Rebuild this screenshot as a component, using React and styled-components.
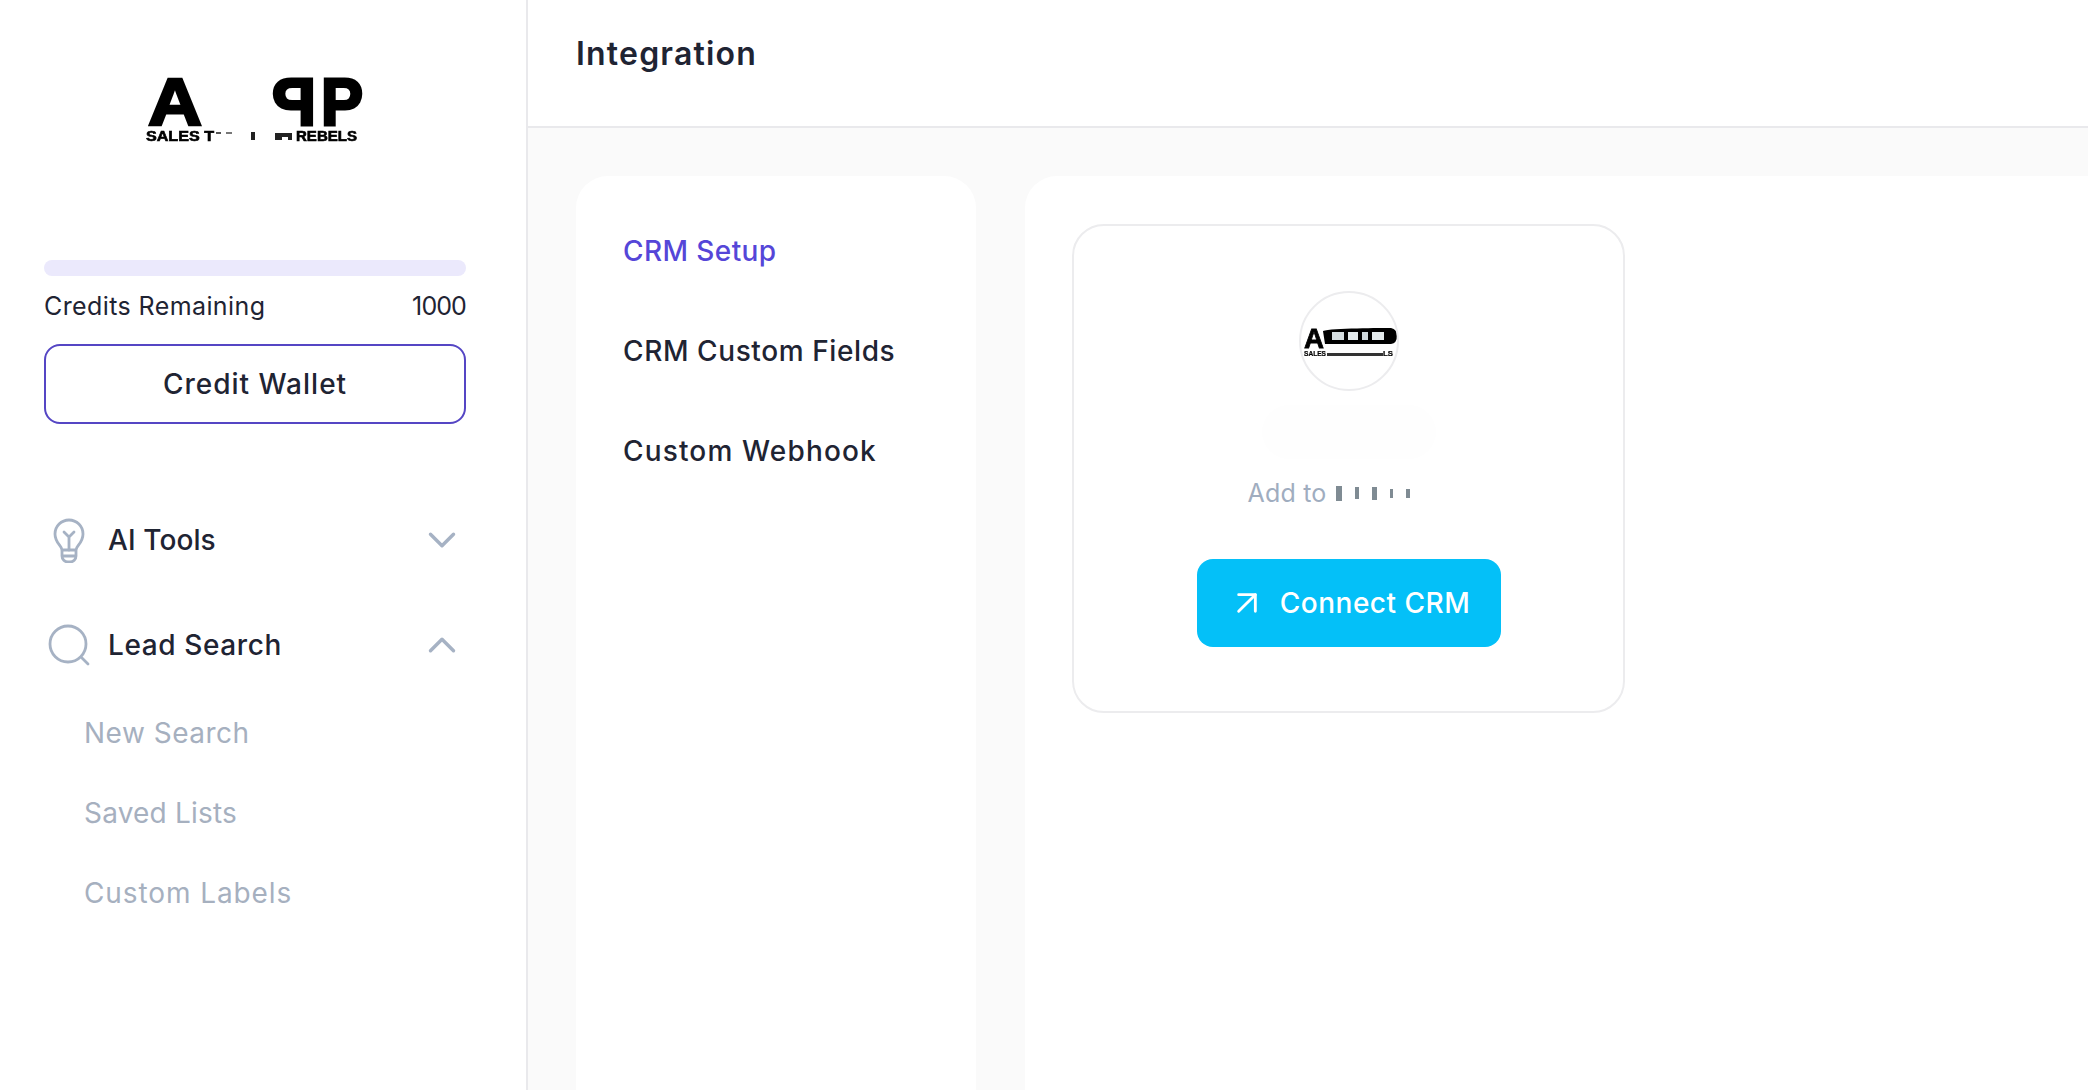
import styled, { createGlobalStyle } from "styled-components"
import { ChevronDown, ChevronUp, ArrowUpRight } from "lucide-react"

const GlobalStyle = createGlobalStyle`
  html, body {
    margin: 0;
    height: 100%;
    overflow: hidden;
    background: #ffffff;
    font-family: Inter, "Noto Sans", sans-serif;
    color: #1f2433;
  }
  * { box-sizing: border-box; }
`

const Page = styled.div`
  display: flex;
  width: 2088px;
  height: 1090px;
  overflow: hidden;
`

const Sidebar = styled.aside`
  flex: 0 0 528px;
  padding: 50px 60px 0 44px;
  background: #ffffff;
  border-right: 2px solid #e9e9ec;
`

const LogoWrap = styled.div`
  height: 100px;
  margin: 0 0 110px 96px;
`

const Progress = styled.div`
  height: 16px;
  border-radius: 8px;
  background: #ebe9fc;
`

const CreditsRow = styled.div`
  display: flex;
  justify-content: space-between;
  align-items: center;
  height: 34px;
  margin-top: 13px;
  font-size: 25px;
  letter-spacing: 0.4px;
`

const CreditsValue = styled.span`
  letter-spacing: -0.9px;
`

const WalletButton = styled.button`
  display: block;
  width: 100%;
  height: 80px;
  margin-top: 21px;
  background: #ffffff;
  border: 2px solid #5546c4;
  border-radius: 16px;
  font: 500 28px Inter, sans-serif;
  color: #1f2433;
  letter-spacing: 1px;
`

const Nav = styled.nav`
  margin-top: 84px;
`

const NavRow = styled.div`
  display: flex;
  align-items: center;
  height: 64px;
  margin-bottom: ${(p) => p.$gap}px;
  font-size: 28px;
  font-weight: 500;
  letter-spacing: ${(p) => p.$track}px;
`

const NavIcon = styled.span`
  display: flex;
  justify-content: center;
  flex: 0 0 44px;
  margin: 0 17px 0 3px;
`

const NavLabel = styled.span`
  flex: 1;
`

const Chevron = styled.span`
  display: flex;
  margin-right: 1px;
  color: #a6b2c4;
`

const SubItem = styled.div`
  display: flex;
  align-items: center;
  height: 80px;
  padding-left: 40px;
  font-size: 28px;
  color: #a6b0bf;
  letter-spacing: ${(p) => p.$track}px;
`

const Main = styled.main`
  flex: 1;
  min-width: 0;
  background: #fafafa;
`

const Header = styled.header`
  display: flex;
  align-items: center;
  height: 128px;
  padding: 0 48px 20px;
  background: #ffffff;
  border-bottom: 2px solid #e9e9ec;
`

const Title = styled.h1`
  margin: 0;
  font-size: 32px;
  font-weight: 600;
  letter-spacing: 1.2px;
`

const Content = styled.div`
  display: flex;
  gap: 49px;
  padding: 48px 0 0 48px;
`

const TabsCard = styled.div`
  flex: 0 0 400px;
  height: 1000px;
  padding: 25px 47px;
  background: #ffffff;
  border-radius: 32px;
`

const Tab = styled.div`
  display: flex;
  align-items: center;
  height: 100px;
  font-size: 28px;
  font-weight: 500;
  letter-spacing: ${(p) => p.$track}px;
  white-space: nowrap;
  color: ${(p) => (p.$active ? "#5546d8" : "#1f2433")};
`

const PanelCard = styled.div`
  flex: 0 0 1200px;
  height: 1000px;
  padding: 48px 48px 48px 47px;
  background: #ffffff;
  border-radius: 32px;
`

const CrmCard = styled.div`
  display: flex;
  flex-direction: column;
  align-items: center;
  width: 553px;
  height: 489px;
  padding-top: 65px;
  border: 2px solid #ececee;
  border-radius: 32px;
`

const CrmLogo = styled.div`
  display: flex;
  align-items: center;
  justify-content: center;
  width: 100px;
  height: 100px;
  border: 2px solid #ececee;
  border-radius: 50%;
  overflow: hidden;
`

const NamePlaceholder = styled.div`
  width: 174px;
  height: 54px;
  margin-top: 14px;
  border-radius: 27px;
  background: #fefefe;
`

const AddRow = styled.div`
  display: flex;
  align-items: center;
  gap: 9px;
  height: 34px;
  margin: 17px 0 0 -40px;
  font-size: 25px;
  letter-spacing: 0.2px;
  color: #a0adbf;
`

const Smudges = styled.span`
  display: flex;
  align-items: center;
  gap: 13px;
  filter: blur(0.7px);
`

const Smudge = styled.i`
  display: block;
  width: ${(p) => p.$w}px;
  height: ${(p) => p.$h}px;
  background: #7f8b93;
`

const ConnectButton = styled.button`
  display: flex;
  align-items: center;
  justify-content: center;
  gap: 13px;
  width: 304px;
  height: 88px;
  margin-top: 49px;
  border: 0;
  border-radius: 16px;
  background: #04c0f8;
  color: #ffffff;
  font: 500 28px Inter, sans-serif;
  letter-spacing: 0.5px;
`

const BlurredSvg = styled.svg`
  filter: blur(${(p) => p.$blur}px);
`

const BrandLogo = () => (
  <BlurredSvg $blur={0.4} width="230" height="100" viewBox="140 50 230 100">
    <g fontFamily="Liberation Sans" fontWeight="700" fill="#000" stroke="#000">
      <text x="148" y="125" fontSize="66" strokeWidth="2.5" textLength="54" lengthAdjust="spacingAndGlyphs">A</text>
      <text x="-316" y="125" fontSize="66" strokeWidth="3" transform="scale(-1 1)" textLength="44" lengthAdjust="spacingAndGlyphs">P</text>
      <text x="321" y="125" fontSize="66" strokeWidth="3" textLength="42" lengthAdjust="spacingAndGlyphs">P</text>
      <text x="146" y="141" fontSize="14" strokeWidth="0.6" textLength="68" lengthAdjust="spacingAndGlyphs">SALES T</text>
      <text x="296" y="141" fontSize="14" strokeWidth="0.6" textLength="61" lengthAdjust="spacingAndGlyphs">REBELS</text>
    </g>
    <rect x="216" y="132" width="5" height="2" fill="#555" />
    <rect x="226" y="132" width="6" height="2" fill="#777" />
    <rect x="251" y="132" width="4" height="8" fill="#222" />
    <path d="M275 133h17v7h-4v-3h-6v3h-7z" fill="#222" />
  </BlurredSvg>
)

const SmallLogo = () => (
  <BlurredSvg $blur={0.5} width="96" height="44" viewBox="0 0 96 44">
    <g fontFamily="Liberation Sans" fontWeight="700" fill="#000" stroke="#000">
      <text x="3" y="29" fontSize="28" strokeWidth="0.8" textLength="20" lengthAdjust="spacingAndGlyphs">A</text>
      <text x="3" y="37" fontSize="6.5" strokeWidth="0.2" textLength="22" lengthAdjust="spacingAndGlyphs">SALES</text>
      <text x="82" y="37" fontSize="6.5" strokeWidth="0.2" textLength="10" lengthAdjust="spacingAndGlyphs">LS</text>
    </g>
    <path d="M22 12c8-3 60-3 68-3q6 1 6 8 0 7-6 8H24z" fill="#000" />
    <rect x="31" y="13" width="12" height="8" fill="#d5dde0" />
    <rect x="47" y="13" width="10" height="8" fill="#e4eaec" />
    <rect x="61" y="13" width="6" height="8" fill="#cfd8dc" />
    <rect x="71" y="13" width="12" height="8" fill="#e4eaec" />
    <path d="M26 34h56v3H26z" fill="#333" />
  </BlurredSvg>
)

const BulbIcon = () => (
  <svg width="32" height="45" viewBox="0 0 32 45" fill="none" stroke="#a6b2c4" strokeWidth="2.8" strokeLinecap="round" strokeLinejoin="round">
    <path d="M9 32c0-4-7-7-7-16a14 14 0 0 1 28 0c0 9-7 12-7 16z" />
    <path d="M16 32V19M11 14l5 5 5-5" />
    <path d="M9 33v5a6 6 0 0 0 6 6h2a6 6 0 0 0 6-6v-5M9 38h14" />
  </svg>
)

const SearchIcon = () => (
  <svg width="42" height="42" viewBox="0 0 42 42" fill="none" stroke="#a6b2c4" strokeWidth="2.8" strokeLinecap="round">
    <circle cx="20" cy="20" r="18" />
    <path d="M34 34l6 6" />
  </svg>
)

const App = () => (
  <Page>
    <GlobalStyle />
    <Sidebar>
      <LogoWrap>
        <BrandLogo />
      </LogoWrap>
      <Progress />
      <CreditsRow>
        <span>Credits Remaining</span>
        <CreditsValue>1000</CreditsValue>
      </CreditsRow>
      <WalletButton>Credit Wallet</WalletButton>
      <Nav>
        <NavRow $gap={41} $track={0.1}>
          <NavIcon>
            <BulbIcon />
          </NavIcon>
          <NavLabel>AI Tools</NavLabel>
          <Chevron>
            <ChevronDown size={46} strokeWidth={1.8} />
          </Chevron>
        </NavRow>
        <NavRow $gap={16} $track={0.6}>
          <NavIcon>
            <SearchIcon />
          </NavIcon>
          <NavLabel>Lead Search</NavLabel>
          <Chevron>
            <ChevronUp size={46} strokeWidth={1.8} />
          </Chevron>
        </NavRow>
        <SubItem $track={0.5}>New Search</SubItem>
        <SubItem $track={0.2}>Saved Lists</SubItem>
        <SubItem $track={0.9}>Custom Labels</SubItem>
      </Nav>
    </Sidebar>
    <Main>
      <Header>
        <Title>Integration</Title>
      </Header>
      <Content>
        <TabsCard>
          <Tab $active $track={0.4}>CRM Setup</Tab>
          <Tab $track={0.6}>CRM Custom Fields</Tab>
          <Tab $track={1.15}>Custom Webhook</Tab>
        </TabsCard>
        <PanelCard>
          <CrmCard>
            <CrmLogo>
              <SmallLogo />
            </CrmLogo>
            <NamePlaceholder />
            <AddRow>
              Add to
              <Smudges>
                <Smudge $w={6} $h={15} />
                <Smudge $w={4} $h={12} />
                <Smudge $w={5} $h={13} />
                <Smudge $w={3} $h={9} />
                <Smudge $w={4} $h={9} />
              </Smudges>
            </AddRow>
            <ConnectButton>
              <ArrowUpRight size={40} strokeWidth={1.7} />
              Connect CRM
            </ConnectButton>
          </CrmCard>
        </PanelCard>
      </Content>
    </Main>
  </Page>
)

export default App
